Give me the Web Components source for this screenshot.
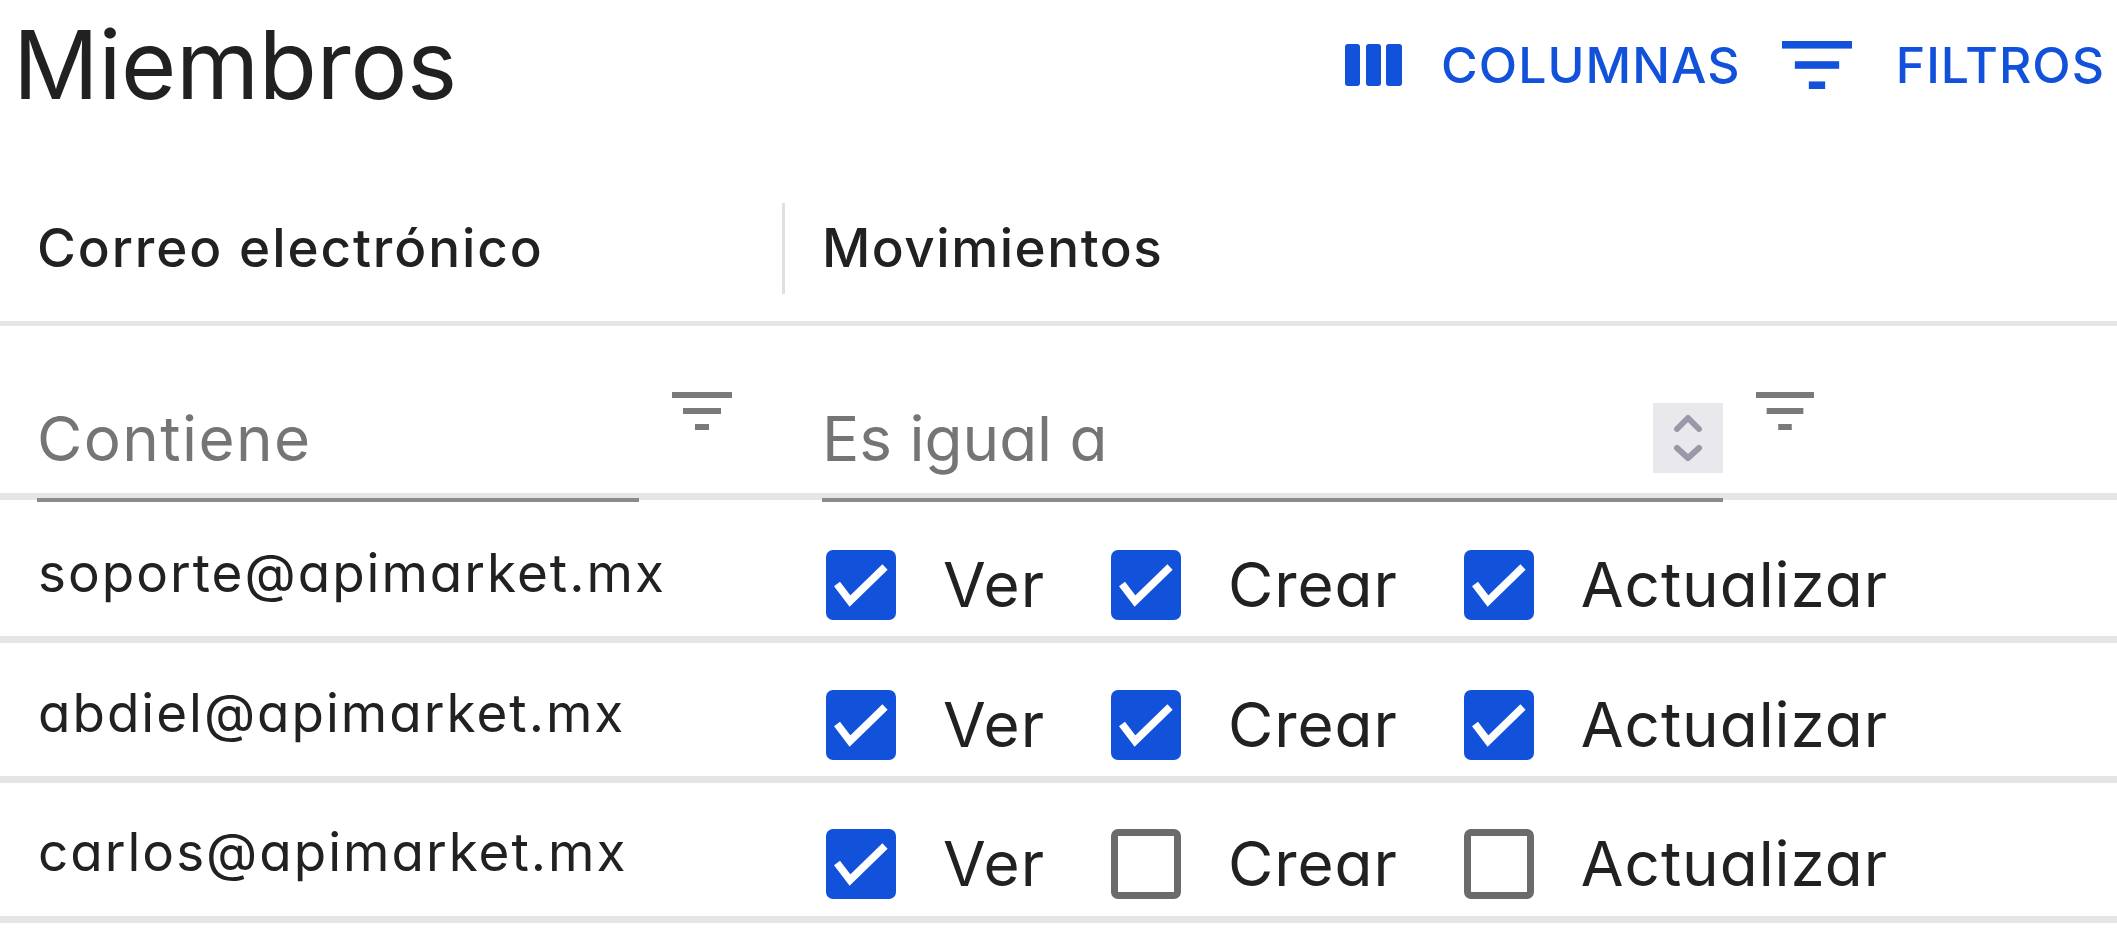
<!DOCTYPE html>
<html lang="es">
<head>
<meta charset="utf-8">
<title>Miembros</title>
<style>
    html, body { margin: 0; padding: 0; background: #fff; overflow: hidden; }
    body { font-family: "Inter", "Liberation Sans", sans-serif; font-feature-settings: "cv11" 1; color: #212121; }
</style>
</head>
<body>
<members-table>
    <tool-button slot="tools" icon="columns" style="--ls:1.05px">COLUMNAS</tool-button>
    <tool-button slot="tools" icon="filter" style="--ls:1px">FILTROS</tool-button>

    <member-row email="soporte@apimarket.mx" style="--alto:136px;--pt:34px">
        <perm-check checked>Ver</perm-check>
        <perm-check checked>Crear</perm-check>
        <perm-check checked>Actualizar</perm-check>
    </member-row>
    <member-row email="abdiel@apimarket.mx" style="--alto:133px;--pt:30px">
        <perm-check checked>Ver</perm-check>
        <perm-check checked>Crear</perm-check>
        <perm-check checked>Actualizar</perm-check>
    </member-row>
    <member-row email="carlos@apimarket.mx" style="--alto:133px;--pt:29px">
        <perm-check checked>Ver</perm-check>
        <perm-check>Crear</perm-check>
        <perm-check>Actualizar</perm-check>
    </member-row>
</members-table>

<script>
// Iconos compartidos: todos en SVG para que escalen con su caja
const FILTER_BARS = `<svg viewBox="0 0 60 38" width="100%" height="100%" preserveAspectRatio="none" fill="currentColor">
    <rect x="0" y="0" width="60" height="6"/><rect x="11" y="16" width="38" height="6"/><rect x="23" y="32" width="14" height="6"/>
</svg>`;

const COLUMNS_BARS = `<svg viewBox="0 0 57 42" width="57" height="42" fill="currentColor">
    <rect x="0" y="0" width="15" height="42" rx="3"/><rect x="21" y="0" width="15" height="42" rx="3"/><rect x="41" y="0" width="16" height="42" rx="3"/>
</svg>`;

// Boton de la barra superior (icono + texto)
class ToolButton extends HTMLElement {
    constructor() {
        super();
        this.shadow = this.attachShadow({ mode: 'open' });
        const esFiltro = this.getAttribute('icon') === 'filter';
        this.shadow.innerHTML = `
            <style>
                :host { display: inline-flex; align-items: center; color: #1251d9; font-size: 50px; font-weight: 500; line-height: 60px; letter-spacing: var(--ls, 0); }
                .icon { display: flex; flex: none; width: ${esFiltro ? 70 : 57}px; height: ${esFiltro ? 48 : 42}px; margin-right: ${esFiltro ? 44 : 39}px; }
            </style>
            <span class="icon">${esFiltro ? FILTER_BARS : COLUMNS_BARS}</span>
            <slot></slot>
        `;
    }
}

// Casilla con su etiqueta
class PermCheck extends HTMLElement {
    constructor() {
        super();
        this.shadow = this.attachShadow({ mode: 'open' });
        const marcada = this.hasAttribute('checked');
        this.shadow.innerHTML = `
            <style>
                :host { display: inline-flex; align-items: center; gap: 47px; font-size: 62px; font-weight: 400; line-height: 70px; letter-spacing: 0.95px; color: #212121; }
                .box { box-sizing: border-box; flex: none; width: 70px; height: 70px; border-radius: 7px; }
                .box.on { background: #1251d9; }
                .box.off { border: 7px solid #6b6b6b; }
                svg { display: block; }
            </style>
            ${marcada
                ? `<span class="box on"><svg viewBox="0 0 70 70" width="70" height="70"><polyline points="11,34 24,51 59,17" fill="none" stroke="#fff" stroke-width="7.5"/></svg></span>`
                : `<span class="box off"></span>`}
            <span><slot></slot></span>
        `;
    }
}

// Fila de un miembro: correo a la izquierda, movimientos a la derecha
class MemberRow extends HTMLElement {
    constructor() {
        super();
        this.shadow = this.attachShadow({ mode: 'open' });
        this.shadow.innerHTML = `
            <style>
                :host { display: grid; grid-template-columns: 785px 1fr; height: var(--alto, 133px); border-bottom: 7px solid #e5e5e5; align-items: center; }
                .email { padding-left: 38px; font-size: 53px; font-weight: 400; line-height: 60px; letter-spacing: 2px; margin-top: calc(var(--pt) - 24px); }
                .perms { display: flex; gap: 66px; padding-left: 41px; padding-top: var(--pt); }
            </style>
            <div class="email">${this.getAttribute('email')}</div>
            <div class="perms"><slot></slot></div>
        `;
    }
}

// Campo de filtro de la cabecera; "spinner" le pone el selector de flechas
class FilterField extends HTMLElement {
    constructor() {
        super();
        this.shadow = this.attachShadow({ mode: 'open' });
        const conFlechas = this.hasAttribute('spinner');
        const selector = conFlechas ? `
            <span class="spin"><svg viewBox="0 0 70 70" width="70" height="70" fill="none" stroke="#9898a6" stroke-width="6" stroke-linecap="round" stroke-linejoin="round">
                <polyline points="24,26 35,15 46,26"/><polyline points="24,45 35,55 46,45"/>
            </svg></span>` : '';
        this.shadow.innerHTML = `
            <style>
                :host { display: flex; align-items: flex-end; justify-content: flex-end; gap: 33px; height: 176px; margin-bottom: -8px; box-sizing: border-box; }
                .field { flex: 1; display: flex; justify-content: space-between; align-items: flex-end; border-bottom: 4px solid #8a8a8a; height: 100px; box-sizing: border-box; min-width: 0; }
                .ph { font-size: 62px; line-height: 74px; color: #757575; padding: 0 0 22px 0; letter-spacing: var(--ls, 0); }
                .spin { flex: none; width: 70px; height: 70px; background: #e9e9ed; margin-bottom: 25px; }
                svg { display: block; }
                .fi { flex: none; width: ${conFlechas ? 58 : 60}px; height: 38px; color: #7a7a7a; align-self: flex-start; margin-top: 66px; }
            </style>
            <div class="field"><span class="ph"><slot></slot></span>${selector}</div>
            <span class="fi">${FILTER_BARS}</span>
        `;
    }
}

// Tabla completa: barra, encabezados, filtros y filas
class MembersTable extends HTMLElement {
    constructor() {
        super();
        this.shadow = this.attachShadow({ mode: 'open' });
        this.render();
    }

    render() {
        this.shadow.innerHTML = `
            <style>
                :host { display: block; width: 2117px; height: 944px; overflow: hidden; }
                .bar { display: flex; justify-content: space-between; align-items: flex-start; height: 170px; padding: 0 12px 0 13px; box-sizing: border-box; }
                h1 { margin: 0; font-size: 95px; font-weight: 400; line-height: 130px; letter-spacing: -0.4px; }
                .tools { display: flex; gap: 41px; padding-top: 35px; }
                .head, .filters { display: grid; grid-template-columns: 785px 1fr; }
                .head { box-sizing: border-box; height: 156px; padding-top: 5px; border-bottom: 5px solid #e5e5e5; align-items: center; }
                .head .c1 { display: flex; justify-content: space-between; align-items: center; padding-left: 37px; font-size: 53px; font-weight: 500; line-height: 60px; letter-spacing: 1.9px; }
                .head .c2 { padding-left: 37px; font-size: 53px; font-weight: 500; line-height: 60px; letter-spacing: 1.5px; }
                .rule { width: 3px; height: 91px; background: #e0e0e0; }
                .filters { height: 167px; border-bottom: 7px solid #e5e5e5; }
                .filters .f1 { padding-left: 37px; padding-right: 53px; }
                .filters .f2 { padding-left: 37px; padding-right: 303px; }
            </style>
            <div class="bar">
                <h1>Miembros</h1>
                <div class="tools"><slot name="tools"></slot></div>
            </div>
            <div class="head">
                <div class="c1"><span>Correo electrónico</span><span class="rule"></span></div>
                <div class="c2">Movimientos</div>
            </div>
            <div class="filters">
                <div class="f1"><filter-field style="--ls:1.4px">Contiene</filter-field></div>
                <div class="f2"><filter-field spinner>Es igual a</filter-field></div>
            </div>
            <slot></slot>
        `;
    }
}

customElements.define('tool-button', ToolButton);
customElements.define('perm-check', PermCheck);
customElements.define('member-row', MemberRow);
customElements.define('filter-field', FilterField);
customElements.define('members-table', MembersTable);
</script>
</body>
</html>
